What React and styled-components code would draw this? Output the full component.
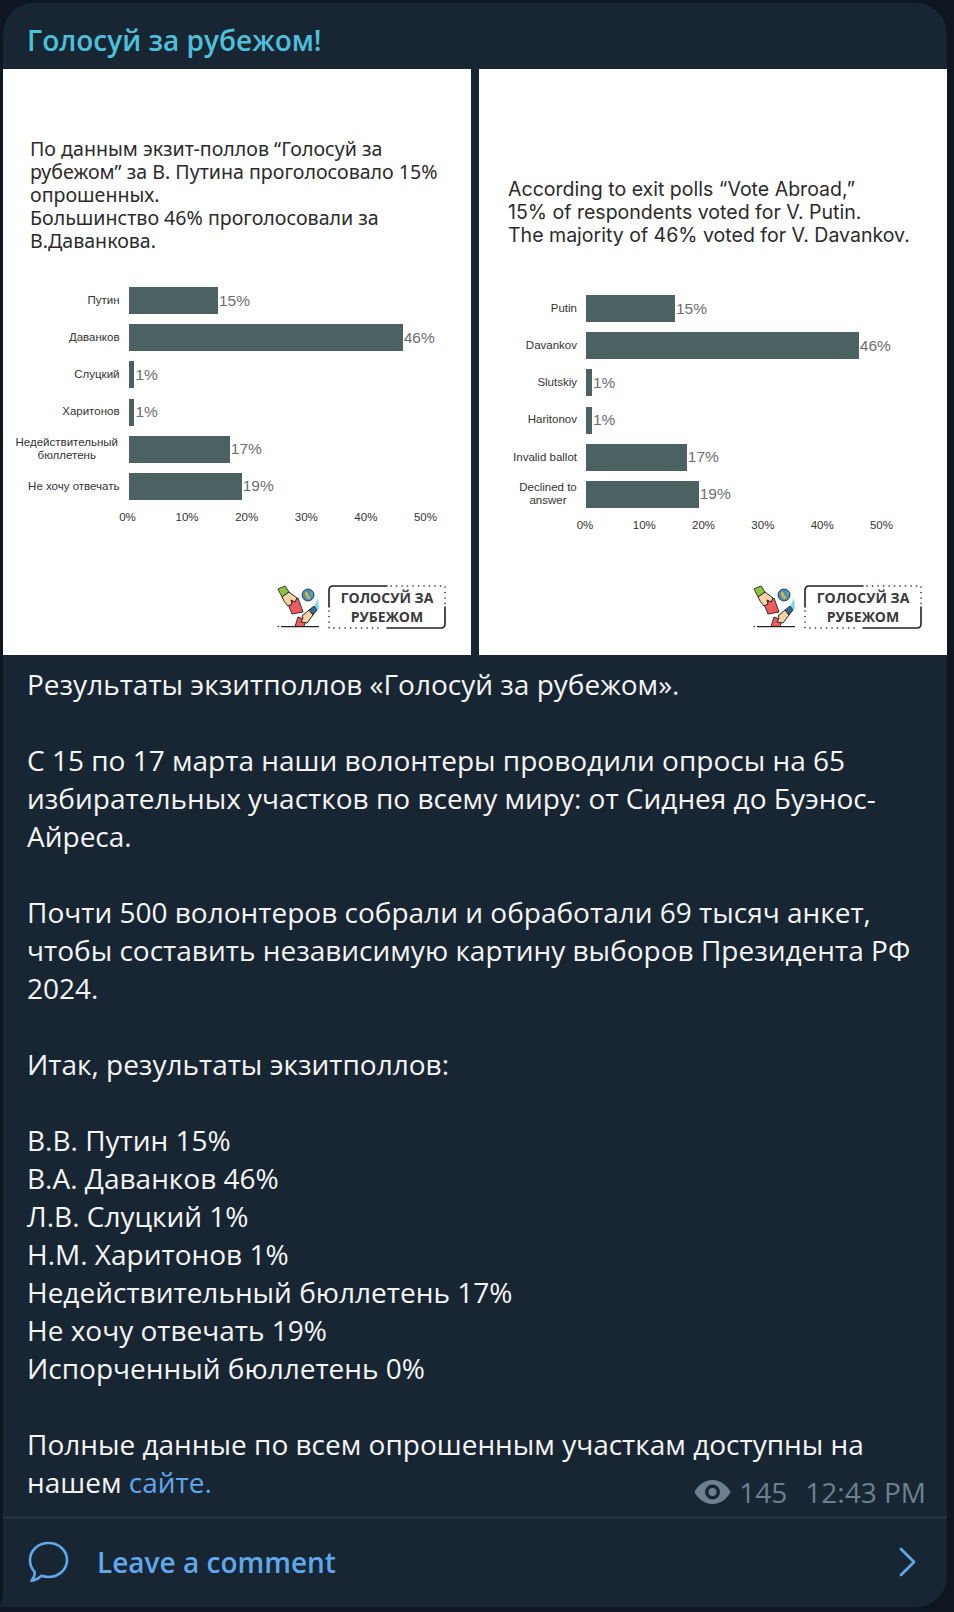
import React from 'react'
import styled, { createGlobalStyle } from 'styled-components'

const GlobalStyle = createGlobalStyle`
  html, body {
    margin: 0;
    padding: 0;
    background: #0e1621;
  }
  * { box-sizing: border-box; }
`

const PANELS = [
  {
    key: 'ru',
    titleTop: 68,
    titleSize: 19.6,
    titleFont: '"Noto Sans", "Open Sans", sans-serif',
    title: ['По данным экзит-поллов “Голосуй за', 'рубежом” за В. Путина проголосовало 15%', 'опрошенных.', 'Большинство 46% проголосовали за', 'В.Даванкова.'],
    titleLeft: 27,
    chartTop: 35,
    labelWidth: 125.5,
    scale: 5.96,
    smallPad: [10, 8],
    logoTop: 61,
    rows: [
      { label: 'Путин', value: 15 },
      { label: 'Даванков', value: 46 },
      { label: 'Слуцкий', value: 1 },
      { label: 'Харитонов', value: 1 },
      { label: 'Недействительный бюллетень', value: 17, small: true },
      { label: 'Не хочу отвечать', value: 19 },
    ],
  },
  {
    key: 'en',
    titleTop: 109,
    titleSize: 19.55,
    titleFont: '"Inter", "Open Sans", sans-serif',
    title: ['According to exit polls “Vote Abroad,”', '15% of respondents voted for V. Putin.', 'The majority of 46% voted for V. Davankov.'],
    titleLeft: 29,
    chartTop: 48,
    labelWidth: 107,
    scale: 5.93,
    smallPad: [37, 6],
    logoTop: 53,
    rows: [
      { label: 'Putin', value: 15 },
      { label: 'Davankov', value: 46 },
      { label: 'Slutskiy', value: 1 },
      { label: 'Haritonov', value: 1 },
      { label: 'Invalid ballot', value: 17 },
      { label: 'Declined to answer', value: 19, small: true },
    ],
  },
]

const TICKS = [0, 10, 20, 30, 40, 50]

const CAPTION = [
  ['Результаты экзитполлов «Голосуй за рубежом».'],
  ['С 15 по 17 марта наши волонтеры проводили опросы на 65 избирательных участков по всему миру: от Сиднея до Буэнос-Айреса.'],
  ['Почти 500 волонтеров собрали и обработали 69 тысяч анкет, чтобы составить независимую картину выборов Президента РФ 2024.'],
  ['Итак, результаты экзитполлов:'],
  ['В.В. Путин 15%', 'В.А. Даванков 46%', 'Л.В. Слуцкий 1%', 'Н.М. Харитонов 1%', 'Недействительный бюллетень 17%', 'Не хочу отвечать 19%', 'Испорченный бюллетень 0%'],
]

function BallotIcon() {
  return (
    <svg width="44" height="44" viewBox="0 0 44 44" fill="none">
      {/* slot and lower ballot */}
      <path d="M21 32 L29 35 L27 41.5 H18 Z" fill="#f05a5f" stroke="#222" strokeWidth="0.9" />
      <path d="M4 41.6 H42" stroke="#222" strokeWidth="1.3" />
      <circle cx="1.2" cy="41.6" r="0.8" fill="#222" />
      {/* upper ballot */}
      <path d="M11 19 L21 13 L26 27 L15 29 Z" fill="#f05a5f" stroke="#222" strokeWidth="0.9" />
      {/* upper hand */}
      <path d="M1 4 L8 1 L12 7 L5 12 Z" fill="#8cc63f" stroke="#222" strokeWidth="0.9" />
      <path d="M5 12 L12 7 L20 13 L18 17 L14 15 L15 19 L11 21 Q7 17 5 12 Z" fill="#f6d3a4" stroke="#222" strokeWidth="1" />
      {/* globe */}
      <circle cx="31" cy="10" r="6" fill="#3f8fc4" stroke="#222" strokeWidth="0.8" />
      <path d="M28 6.5 Q32 7 31 10 Q34 11 33 14.5 Q29 13.5 28 10 Z" fill="#d9b23e" />
      <path d="M34 7 L36 9 L34.5 11 Z" fill="#7cc576" />
      {/* lower hand */}
      <path d="M41 13 L42 24 L35 26 Z" fill="#7bd8ef" />
      <path d="M32 25 L37 21 L40 25 L36 30 Z" fill="#2f6d94" stroke="#222" strokeWidth="0.9" />
      <path d="M25 31 L32 25 L36 30 L30 38 L24 37 L26 33 Z" fill="#f6d3a4" stroke="#222" strokeWidth="1" />
    </svg>
  )
}

function LogoFrame() {
  return (
    <FrameSvg viewBox="0 0 118 44" fill="none">
      <path d="M1 22 V5 Q1 1 5 1 H59" stroke="#222" strokeWidth="1.6" strokeLinecap="round" />
      <path d="M117 22 V39 Q117 43 113 43 H59" stroke="#222" strokeWidth="1.6" strokeLinecap="round" />
      <path d="M63 1 H117 V21" stroke="#222" strokeWidth="1.6" strokeLinecap="round" strokeDasharray="0.1 5.4" />
      <path d="M1 26 V43 H55" stroke="#222" strokeWidth="1.6" strokeLinecap="round" strokeDasharray="0.1 5.4" />
    </FrameSvg>
  )
}

function CommentIcon() {
  return (
    <svg width="41" height="42" viewBox="0 0 41 42" fill="none">
      <path
        d="M20.5 2 C31 2 39 9.5 39 19 C39 28.5 31 36 20.5 36 C18 36 15.5 35.5 13.5 34.8 C11 37 7.5 39.5 3.5 39.8 C5.5 37.5 6.8 34.5 6.8 31 C3.8 28 2 23.8 2 19 C2 9.5 10 2 20.5 2 Z"
        stroke="#5fa9ea"
        strokeWidth="2.6"
        strokeLinejoin="round"
      />
    </svg>
  )
}

function Chart({ panel }) {
  return (
    <ChartBox $top={panel.chartTop}>
      {panel.rows.map((row) => (
        <ChartRow key={row.label}>
          <BarLabel $width={panel.labelWidth} $pad={row.small ? panel.smallPad : null}>
            {row.label}
          </BarLabel>
          <Bar $width={row.value * panel.scale} />
          <BarValue>{row.value}%</BarValue>
        </ChartRow>
      ))}
      <Axis $left={panel.labelWidth - panel.scale * 5 - 1}>
        {TICKS.map((tick) => (
          <Tick key={tick} $width={panel.scale * 10}>{tick}%</Tick>
        ))}
      </Axis>
    </ChartBox>
  )
}

export default function App() {
  return (
    <Page>
      <GlobalStyle />
      <Bubble>
        <Tail />
        <Channel>Голосуй за рубежом!</Channel>
        <Album>
          {PANELS.map((panel) => (
            <Slide key={panel.key}>
              <SlideTitle $top={panel.titleTop} $left={panel.titleLeft} $size={panel.titleSize} $font={panel.titleFont}>
                {panel.title.map((line) => (
                  <div key={line}>{line}</div>
                ))}
              </SlideTitle>
              <Chart panel={panel} />
              <Logo $top={panel.logoTop}>
                <BallotIcon />
                <LogoBox>
                  <LogoFrame />
                  <span>ГОЛОСУЙ ЗА</span>
                  <span>РУБЕЖОМ</span>
                </LogoBox>
              </Logo>
            </Slide>
          ))}
        </Album>
        <Caption>
          {CAPTION.map((para) => (
            <Paragraph key={para[0]}>
              {para.map((line) => (
                <div key={line}>{line}</div>
              ))}
            </Paragraph>
          ))}
          <div>Полные данные по всем опрошенным участкам доступны на</div>
          <LastLine>
            <div>
              нашем <SiteLink>сайте.</SiteLink>
            </div>
            <Meta>
              <svg width="37" height="26" viewBox="0 0 37 26">
                <path
                  fill="#6d8092"
                  fillRule="evenodd"
                  d="M18.5 1 C28 1 34 8 36.5 13 C34 18 28 25 18.5 25 C9 25 3 18 0.5 13 C3 8 9 1 18.5 1 Z M18.5 5.5 A7.5 7.5 0 1 0 18.5 20.5 A7.5 7.5 0 1 0 18.5 5.5 Z M18.5 9 A4 4 0 1 1 18.5 17 A4 4 0 1 1 18.5 9 Z"
                />
              </svg>
              <Views>145</Views>
              <span>12:43 PM</span>
            </Meta>
          </LastLine>
        </Caption>
        <CommentBar>
          <CommentIcon />
          <CommentText>Leave a comment</CommentText>
          <svg width="17" height="30" viewBox="0 0 17 30" fill="none">
            <path d="M2 2 L15 15 L2 28" stroke="#5fa9ea" strokeWidth="2.8" strokeLinecap="round" strokeLinejoin="round" />
          </svg>
        </CommentBar>
      </Bubble>
    </Page>
  )
}

const Page = styled.div`
  width: 954px;
  height: 1612px;
  padding: 3px 7px 5px 3px;
  background: #0e1621;
  font-family: "Open Sans", "Noto Sans", sans-serif;
  overflow: hidden;
`

const Bubble = styled.div`
  position: relative;
  width: 944px;
  height: 1604px;
  display: flex;
  flex-direction: column;
  background: #182533;
  border-radius: 31px 31px 31px 0;
`

const Tail = styled.div`
  position: absolute;
  left: -3px;
  bottom: 0;
  width: 3px;
  height: 12px;
  background: #182533;
  clip-path: polygon(100% 0, 100% 100%, 0 100%);
`

const Channel = styled.div`
  height: 66px;
  padding: 18px 0 0 24px;
  font-size: 28px;
  line-height: 38px;
  font-weight: 600;
  color: #4dc0da;
`

const Album = styled.div`
  display: flex;
  gap: 8px;
`

const Slide = styled.div`
  width: 468px;
  height: 586px;
  display: flex;
  flex-direction: column;
  background: #fff;
`

const SlideTitle = styled.div`
  padding: ${(p) => p.$top}px 0 0 ${(p) => p.$left}px;
  font-family: ${(p) => p.$font};
  font-size: ${(p) => p.$size}px;
  line-height: 23px;
  color: #2b2b2b;
  white-space: nowrap;
`

const ChartBox = styled.div`
  display: flex;
  flex-direction: column;
  gap: 10.2px;
  margin-top: ${(p) => p.$top}px;
  font-family: "Liberation Sans", Arial, sans-serif;
`

const ChartRow = styled.div`
  display: flex;
  align-items: center;
  height: 27px;
`

const BarLabel = styled.div`
  flex: none;
  width: ${(p) => p.$width}px;
  padding: ${(p) => (p.$pad ? `0 ${p.$pad[1]}px 0 ${p.$pad[0]}px` : '0 9px 0 0')};
  font-size: 11.5px;
  line-height: 13.5px;
  color: #333;
  text-align: ${(p) => (p.$pad ? 'center' : 'right')};
`

const Bar = styled.div`
  flex: none;
  width: ${(p) => p.$width}px;
  height: 27px;
  background: #4c6162;
`

const BarValue = styled.div`
  margin-left: 1px;
  font-size: 15.5px;
  color: #6e6e6e;
`

const Axis = styled.div`
  display: flex;
  margin: 0 0 0 ${(p) => p.$left}px;
  font-size: 11.5px;
  line-height: 14px;
  color: #333;
`

const Tick = styled.div`
  width: ${(p) => p.$width}px;
  text-align: center;
`

const Logo = styled.div`
  display: flex;
  align-items: center;
  align-self: flex-end;
  gap: 7px;
  margin: ${(p) => p.$top}px 25px 0 0;
`

const LogoBox = styled.div`
  position: relative;
  width: 118px;
  height: 44px;
  display: flex;
  flex-direction: column;
  align-items: center;
  justify-content: center;
  font-size: 14px;
  line-height: 19px;
  font-weight: 700;
  color: #3a3a3a;
  white-space: nowrap;
`

const FrameSvg = styled.svg`
  position: absolute;
  inset: 0;
  width: 118px;
  height: 44px;
`

const Caption = styled.div`
  flex: 1;
  padding: 10px 19px 0 24px;
  font-size: 28px;
  line-height: 38px;
  color: #f5f5f5;
`

const Paragraph = styled.div`
  margin-bottom: 38px;
`

const LastLine = styled.div`
  display: flex;
  justify-content: space-between;
  align-items: flex-start;
  height: 38px;
  padding-right: 2px;
`

const SiteLink = styled.span`
  color: #5fa9ea;
`

const Meta = styled.div`
  display: flex;
  align-items: center;
  margin-top: 14px;
  font-size: 28px;
  line-height: 30px;
  color: #6d8092;
`

const Views = styled.span`
  margin: 0 18px 0 8px;
`

const CommentBar = styled.div`
  display: flex;
  align-items: center;
  height: 90px;
  padding: 0 31px 2px 25px;
  border-top: 1.5px solid #2f3d4c;
`

const CommentText = styled.div`
  flex: 1;
  margin-left: 28px;
  font-size: 28px;
  line-height: 38px;
  font-weight: 600;
  color: #5fa9ea;
`
